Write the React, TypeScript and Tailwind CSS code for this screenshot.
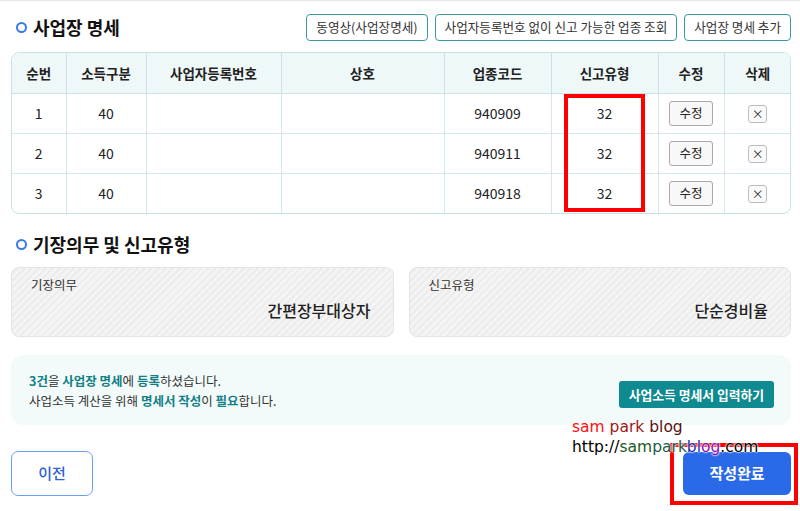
import React from 'react';

type Row = { no: number; kind: string; regNo: string; name: string; code: string; type: string };

const rows: Row[] = [
  { no: 1, kind: '40', regNo: '', name: '', code: '940909', type: '32' },
  { no: 2, kind: '40', regNo: '', name: '', code: '940911', type: '32' },
  { no: 3, kind: '40', regNo: '', name: '', code: '940918', type: '32' },
];

const cols = ['w-[54px]', 'w-[80px]', 'w-[135px]', 'w-[163px]', 'w-[107px]', 'w-[107px]', 'w-[66px]', 'w-[67px]'];
const heads = ['순번', '소득구분', '사업자등록번호', '상호', '업종코드', '신고유형', '수정', '삭제'];

const SectionTitle = ({ children }: { children: React.ReactNode }) => (
  <h2 className="flex items-center gap-[6px] text-[18px] font-bold text-[#111]">
    <span className="w-[11px] h-[11px] rounded-full border-[2.5px] border-[#3b78e7]" />
    {children}
  </h2>
);

const OutlineButton = ({ children }: { children: React.ReactNode }) => (
  <button className="h-[27px] px-[9px] rounded-[4px] border border-[#3a9aa3] text-[12.6px] text-[#333] bg-white">
    {children}
  </button>
);

const striped =
  'bg-[repeating-linear-gradient(135deg,#f4f4f4_0px,#f4f4f4_3px,#ececec_3px,#ececec_5px)]';

const InfoBox = ({ label, value }: { label: string; value: string }) => (
  <div className={`flex-1 h-[70px] rounded-[8px] border border-[#e4e4e4] ${striped} px-[19px] pt-[8px]`}>
    <div className="text-[12.5px] text-[#333]">{label}</div>
    <div className="text-right text-[16px] font-medium text-[#222] mt-[3px] pr-[3px]">{value}</div>
  </div>
);

const cell = (ri: number, first = false) =>
  `${first ? '' : 'border-l'} ${ri < rows.length - 1 ? 'border-b' : ''} border-[#d3e8ea]`;

export default function App() {
  return (
    <div className="relative w-[800px] h-[511px] bg-white border-t border-[#e6e6ea] font-['Noto_Sans_CJK_KR','Noto_Sans',sans-serif] text-[#222]">
      <div className="px-[11px] pr-[9px]">
        {/* 사업장 명세 */}
        <div className="flex items-center justify-between pt-[13px]">
          <div className="pl-[5px]">
            <SectionTitle>사업장 명세</SectionTitle>
          </div>
          <div className="flex gap-[7px]">
            <OutlineButton>동영상(사업장명세)</OutlineButton>
            <OutlineButton>사업자등록번호 없이 신고 가능한 업종 조회</OutlineButton>
            <OutlineButton>사업장 명세 추가</OutlineButton>
          </div>
        </div>

        <div className="mt-[11px] rounded-[8px] border border-[#c9e3e5] overflow-hidden">
          <table className="w-full border-collapse text-[14px] table-fixed">
            <thead>
              <tr className="h-[40px] bg-[#eef8f8] text-[13.5px]">
                {heads.map((h, i) => (
                  <th
                    key={h}
                    className={`${cols[i]} font-bold text-[#222] border-b ${i > 0 ? 'border-l' : ''} border-[#c9e3e5]`}
                  >
                    {h}
                  </th>
                ))}
              </tr>
            </thead>
            <tbody>
              {rows.map((r, ri) => (
                <tr key={r.no} className="h-[40px] text-center">
                  <td className={cell(ri, true)}>{r.no}</td>
                  <td className={cell(ri)}>{r.kind}</td>
                  <td className={cell(ri)}>{r.regNo}</td>
                  <td className={cell(ri)}>{r.name}</td>
                  <td className={cell(ri)}>{r.code}</td>
                  <td className={cell(ri)}>{r.type}</td>
                  <td className={cell(ri)}>
                    <button className="h-[25px] w-[44px] rounded-[3px] border border-[#a9a9a9] bg-[#f8f8f8] text-[12.5px] text-[#222]">
                      수정
                    </button>
                  </td>
                  <td className={cell(ri)}>
                    <button className="h-[18px] w-[19px] rounded-[3px] border border-[#bdbdbd] bg-[#fafafa] text-[12px] leading-none text-[#333]">
                      ×
                    </button>
                  </td>
                </tr>
              ))}
            </tbody>
          </table>
        </div>

        {/* 기장의무 및 신고유형 */}
        <div className="pl-[5px] mt-[17px]">
          <SectionTitle>기장의무 및 신고유형</SectionTitle>
        </div>
        <div className="flex gap-[15px] mt-[9px]">
          <InfoBox label="기장의무" value="간편장부대상자" />
          <InfoBox label="신고유형" value="단순경비율" />
        </div>

        <div className="mt-[18px] h-[70px] rounded-[12px] bg-[#f2fbfa] flex items-center justify-between pl-[18px] pr-[17px]">
          <div className="text-[12.5px] leading-[20px] text-[#333] pt-[2px]">
            <p>
              <b className="text-[#137f86]">3건</b>을 <b className="text-[#137f86]">사업장 명세</b>에{' '}
              <b className="text-[#137f86]">등록</b>하셨습니다.
            </p>
            <p>
              사업소득 계산을 위해 <b className="text-[#137f86]">명세서 작성</b>이 <b className="text-[#137f86]">필요</b>합니다.
            </p>
          </div>
          <button className="mt-[9px] h-[27px] px-[10px] rounded-[3px] bg-[#0f8a91] text-white text-[12.8px] font-bold">
            사업소득 명세서 입력하기
          </button>
        </div>

        <div className="flex justify-between mt-[26px]">
          <button className="w-[82px] h-[45px] rounded-[7px] border border-[#6a9ff8] text-[#2d5ed6] text-[15px] font-medium bg-white">
            이전
          </button>
          <button className="mt-[1px] w-[108px] h-[43px] rounded-[6px] bg-[#2a69e8] text-white text-[15px] font-bold">
            작성완료
          </button>
        </div>
      </div>

      {/* 강조 표시 */}
      <div className="absolute left-[564px] top-[93px] w-[81px] h-[118px] border-[4px] border-[#ff0000]" />
      <div className="absolute left-[670px] top-[442px] w-[128px] h-[62px] border-[4px] border-[#ff0000]" />

      {/* 블로그 표기 */}
      <div className="absolute left-[572px] top-[416px] text-[15.5px] leading-[20px] font-['DejaVu_Sans',sans-serif] [text-shadow:0_0_2px_#fff,0_0_2px_#fff,0_0_2px_#fff]">
        <div>
          <span className="text-[#ff1010]">sam </span>
          <span className="text-[#a01818]">park </span>
          <span className="text-[#5a1010]">blog</span>
        </div>
        <div className="text-black">
          http://
          <span className="text-[#1c5a1c]">sam</span>
          <span className="text-[#1c5a4a]">park</span>
          <span className="text-[#2030b0]">bl</span>
          <span className="text-[#8a10b8]">og</span>
          .com
        </div>
      </div>
    </div>
  );
}
